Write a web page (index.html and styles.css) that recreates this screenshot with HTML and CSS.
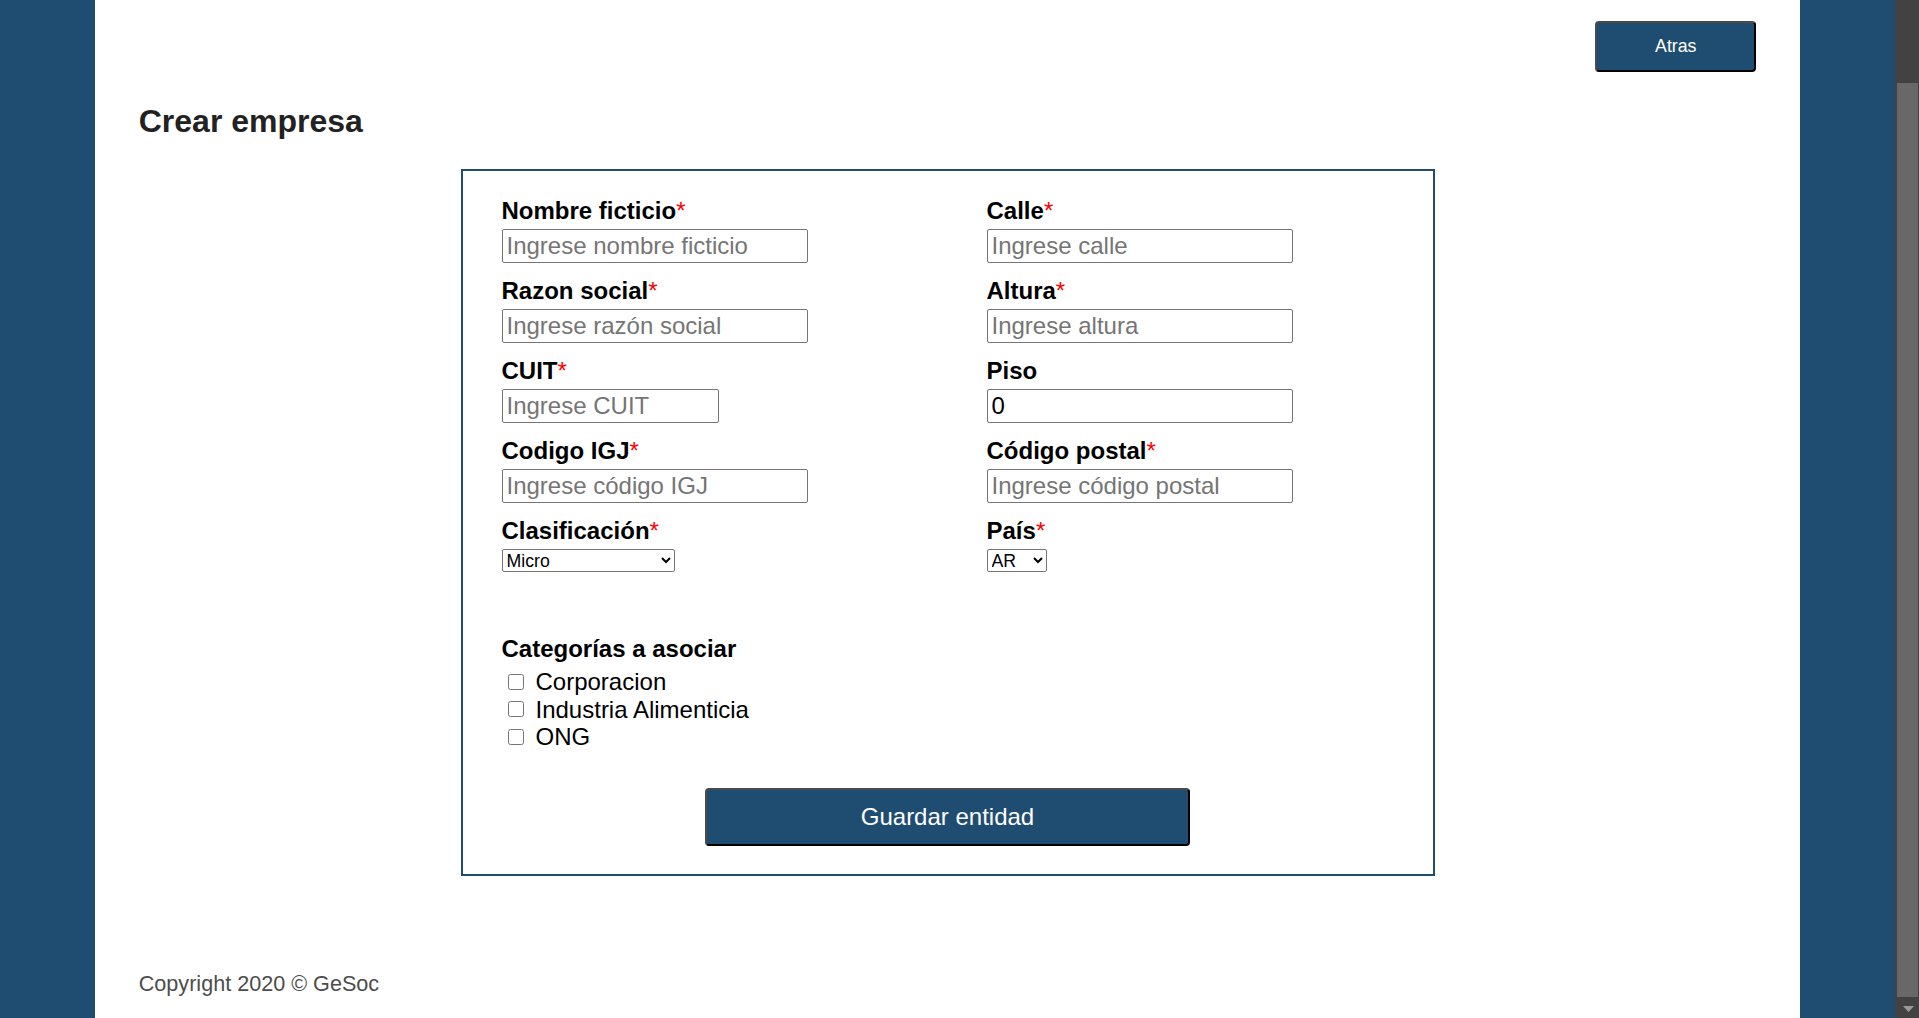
FILE: index.html
```html
<!DOCTYPE html>
<html lang="es">
<head>
<meta charset="utf-8">
<title>Crear empresa</title>
<link rel="stylesheet" href="styles.css">
</head>
<body>
<div class="page">
  <div class="topbar">
    <button class="btn btn-back" type="button">Atras</button>
  </div>
  <h1 class="title">Crear empresa</h1>
  <form class="card">
    <div class="grid">
      <div class="field">
        <label class="lbl">Nombre ficticio<span class="req">*</span></label>
        <input class="inp" type="text" placeholder="Ingrese nombre ficticio">
      </div>
      <div class="field">
        <label class="lbl">Calle<span class="req">*</span></label>
        <input class="inp" type="text" placeholder="Ingrese calle">
      </div>
      <div class="field">
        <label class="lbl">Razon social<span class="req">*</span></label>
        <input class="inp" type="text" placeholder="Ingrese razón social">
      </div>
      <div class="field">
        <label class="lbl">Altura<span class="req">*</span></label>
        <input class="inp" type="text" placeholder="Ingrese altura">
      </div>
      <div class="field">
        <label class="lbl">CUIT<span class="req">*</span></label>
        <input class="inp inp-short" type="text" placeholder="Ingrese CUIT">
      </div>
      <div class="field">
        <label class="lbl">Piso</label>
        <input class="inp" type="text" value="0">
      </div>
      <div class="field">
        <label class="lbl">Codigo IGJ<span class="req">*</span></label>
        <input class="inp" type="text" placeholder="Ingrese código IGJ">
      </div>
      <div class="field">
        <label class="lbl">Código postal<span class="req">*</span></label>
        <input class="inp" type="text" placeholder="Ingrese código postal">
      </div>
      <div class="field">
        <label class="lbl">Clasificación<span class="req">*</span></label>
        <select class="sel sel-wide">
          <option>Micro</option>
          <option>Pequeña</option>
          <option>Mediana</option>
        </select>
      </div>
      <div class="field">
        <label class="lbl">País<span class="req">*</span></label>
        <select class="sel sel-narrow">
          <option>AR</option>
        </select>
      </div>
    </div>

    <div class="cats">
      <div class="lbl">Categorías a asociar</div>
      <label class="chk"><input type="checkbox" class="box"><span>Corporacion</span></label>
      <label class="chk"><input type="checkbox" class="box"><span>Industria Alimenticia</span></label>
      <label class="chk"><input type="checkbox" class="box"><span>ONG</span></label>
    </div>

    <div class="actions">
      <button class="btn btn-save" type="button">Guardar entidad</button>
    </div>
  </form>
  <footer class="footer">Copyright 2020 © GeSoc</footer>
</div>

<div class="scrollbar" aria-hidden="true">
  <div class="sb-btn"></div>
  <div class="sb-track"><div class="sb-thumb"></div></div>
  <div class="sb-btn sb-down">
    <svg width="11" height="6" viewBox="0 0 11 6"><path d="M0 0H11L5.5 6Z" fill="#9a9a9a"/></svg>
  </div>
</div>
</body>
</html>
```

FILE: styles.css
```css
html {
  background: #1f4d72;
  overflow: hidden;
}

body {
  margin: 0 24px 0 0;
  font-family: "Liberation Sans", Arial, sans-serif;
  color: #000;
}

.page {
  width: 90%;
  margin: 0 auto;
  background: #fff;
  box-sizing: border-box;
  padding: 21px 44px 22px;
}

.topbar {
  display: flex;
  justify-content: flex-end;
}

.btn {
  font-family: "Liberation Sans", Arial, sans-serif;
  background: #1f4d72;
  color: #fff;
  border-style: solid;
  border-width: 2px;
  border-color: #4a4a4a #000 #000 #4a4a4a;
  border-radius: 4px;
  cursor: pointer;
  padding: 0;
}

.btn-back {
  width: 161px;
  height: 51px;
  font-size: 17.7px;
}

.title {
  margin: 31px 0 0;
  font-size: 32px;
  line-height: 37px;
  font-weight: bold;
  color: #222;
}

.card {
  width: 974px;
  box-sizing: border-box;
  margin: 29px auto 0;
  border: 2px solid #1f4d72;
  padding: 26px 39px 28px 39px;
}

.grid {
  display: grid;
  grid-template-columns: 485px 1fr;
  row-gap: 14px;
}

.field {
  display: flex;
  flex-direction: column;
  align-items: flex-start;
}

.lbl {
  display: block;
  font-size: 24px;
  line-height: 28px;
  font-weight: bold;
  color: #000;
  margin-bottom: 4px;
}

.req {
  color: #f00;
  font-weight: normal;
}

.inp {
  box-sizing: border-box;
  width: 306px;
  height: 34px;
  margin: 0;
  padding: 0 4px;
  border: 1px solid #767676;
  border-radius: 2px;
  font-family: "Liberation Sans", Arial, sans-serif;
  font-size: 24px;
  color: #000;
  background: #fff;
}

.inp::placeholder {
  color: #757575;
}

.inp-short {
  width: 217px;
}

.sel {
  box-sizing: border-box;
  height: 23px;
  margin: 0;
  font-family: "Liberation Sans", Arial, sans-serif;
  font-size: 17.7px;
  color: #000;
  background: #fff;
  border: 1px solid #767676;
  border-radius: 2px;
}

.sel-wide {
  width: 173px;
}

.sel-narrow {
  width: 60px;
}

.cats {
  margin-top: 63px;
}

.cats .lbl {
  margin-bottom: 5px;
}

.chk {
  display: flex;
  align-items: center;
  font-size: 24px;
  line-height: 27.6px;
  height: 27.6px;
}

.box {
  width: 16px;
  height: 16px;
  margin: 0 12px 0 6px;
}

.actions {
  display: flex;
  justify-content: center;
  margin-top: 37px;
}

.btn-save {
  width: 485px;
  height: 58px;
  font-size: 24px;
}

.footer {
  margin-top: 95px;
  font-size: 21.6px;
  line-height: 25px;
  color: #4d4d4d;
}

/* window scrollbar, as in the captured frame */
.scrollbar {
  position: fixed;
  top: 0;
  right: 0;
  bottom: 0;
  width: 24px;
  background: #424242;
  display: flex;
  flex-direction: column;
}

.sb-btn {
  height: 21px;
  flex: none;
}

.sb-down {
  display: flex;
  justify-content: center;
  align-items: flex-end;
  padding: 0 0 6px 2px;
  box-sizing: border-box;
}

.sb-down svg {
  display: block;
}

.sb-track {
  flex: 1;
  padding-top: 62px;
}

.sb-thumb {
  height: 914px;
  margin: 0 1px 0 2px;
  background: #686868;
}
```
